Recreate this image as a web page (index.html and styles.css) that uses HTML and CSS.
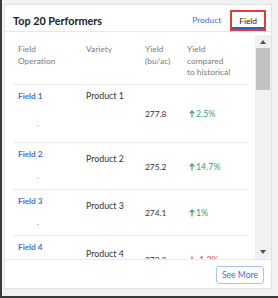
FILE: index.html
```html
<!DOCTYPE html>
<html>
<head>
<meta charset="utf-8">
<link rel="stylesheet" href="styles.css">
</head>
<body>
<div class="frame">
  <div class="card">
    <div class="card-head">
      <div class="title">Top 20 Performers</div>
      <div class="tabs">
        <div class="tab">Product</div>
        <div class="tab tab-active">Field</div>
      </div>
    </div>
    <div class="card-body">
      <div class="table">
        <div class="thead">
          <div>Field<br>Operation</div>
          <div>Variety</div>
          <div>Yield<br>(bu/ac)</div>
          <div>Yield<br>compared<br>to historical</div>
        </div>
        <div class="row row-a">
          <div class="c-field"><span class="link">Field 1</span><span class="dot"></span></div>
          <div class="c-variety">Product 1</div>
          <div class="c-yield">277.8</div>
          <div class="c-change up"><svg class="arrow" viewBox="0 0 6 8"><path d="M3 7.6V0.9M0.6 3.3L3 0.9L5.4 3.3"/></svg>2.5%</div>
        </div>
        <div class="row row-b">
          <div class="c-field"><span class="link">Field 2</span><span class="dot"></span></div>
          <div class="c-variety">Product 2</div>
          <div class="c-yield">275.2</div>
          <div class="c-change up"><svg class="arrow" viewBox="0 0 6 8"><path d="M3 7.6V0.9M0.6 3.3L3 0.9L5.4 3.3"/></svg>14.7%</div>
        </div>
        <div class="row row-c">
          <div class="c-field"><span class="link">Field 3</span><span class="dot"></span></div>
          <div class="c-variety">Product 3</div>
          <div class="c-yield">274.1</div>
          <div class="c-change up"><svg class="arrow" viewBox="0 0 6 8"><path d="M3 7.6V0.9M0.6 3.3L3 0.9L5.4 3.3"/></svg>1%</div>
        </div>
        <div class="row row-d">
          <div class="c-field"><span class="link">Field 4</span><span class="dot"></span></div>
          <div class="c-variety">Product 4</div>
          <div class="c-yield">273.3</div>
          <div class="c-change down"><svg class="arrow" viewBox="0 0 6 8"><path d="M3 0.4V7.1M0.6 4.7L3 7.1L5.4 4.7"/></svg>-1.2%</div>
        </div>
      </div>
      <div class="scrollbar">
        <div class="sb-btn"><span class="tri-up"></span></div>
        <div class="sb-thumb"></div>
        <div class="sb-fill"></div>
        <div class="sb-btn sb-btn-down"><span class="tri-down"></span></div>
      </div>
    </div>
    <div class="card-foot">
      <button class="btn">See More</button>
    </div>
  </div>
</div>
</body>
</html>
```

FILE: styles.css
```css
* { box-sizing: border-box; }
html, body { margin: 0; padding: 0; }
body {
  font-family: Lato, "Open Sans", Arial, sans-serif;
  color: #333;
  background: #f2f2f2;
}
.frame {
  width: 278px;
  height: 298px;
  border-left: 2px solid #3a3a3a;
  border-bottom: 2px solid #3a3a3a;
  background: #f2f2f2;
  padding: 4px 6px 7px 2px;
}
.card {
  width: 268px;
  height: 285px;
  background: #fff;
  border: 1px solid #e2e2e2;
  display: flex;
  flex-direction: column;
}
.card-head {
  height: 27px;
  flex: none;
  border-bottom: 1px solid #e8e8e8;
  display: flex;
  align-items: flex-end;
  justify-content: space-between;
  padding: 0 5px 0 8px;
}
.title {
  font-weight: 700;
  font-size: 10.8px;
  line-height: 21px;
  color: #222;
}
.tabs {
  display: flex;
  align-items: stretch;
  height: 21px;
}
.tab {
  font-size: 8.4px;
  color: #3f6fd1;
  display: flex;
  align-items: center;
  padding: 0 9px 1px;
}
.tab-active {
  color: #222;
  border: 2px solid #e53935;
  box-shadow: inset 0 -2px 0 #2f5fd0;
  padding: 0 7px 0;
}
.card-body {
  height: 228px;
  flex: none;
  display: flex;
  border-bottom: 1px solid #ececec;
}
.table {
  flex: 1;
  overflow: hidden;
  padding: 0 8px;
}
.thead, .row {
  display: grid;
  grid-template-columns: 68px 59px 42px 1fr;
  padding-left: 5px;
  border-bottom: 1px solid #ececec;
}
.thead {
  font-size: 8.4px;
  line-height: 11.5px;
  color: #7a7a7a;
  padding-top: 12px;
  height: 53px;
}
.row {
  font-size: 8.8px;
  line-height: 12px;
  color: #333;
  align-items: start;
}
.c-field { display: flex; flex-direction: column; }
.link {
  font-weight: 700;
  font-size: 8.2px;
  color: #3d72d9;
}
.dot {
  width: 2px;
  height: 1px;
  background: #c4c4c4;
  margin-left: 19px;
}
.c-yield { font-size: 8.4px; }
.c-change {
  display: flex;
  align-items: center;
  font-size: 8.8px;
  padding-left: 2px;
}
.up { color: #35a273; }
.down { color: #e0463f; }
.arrow {
  width: 6px;
  height: 8px;
  margin-right: 1px;
  fill: none;
  stroke: currentColor;
  stroke-width: 1.2;
}
.row-a { height: 58px; }
.row-a .c-field, .row-a .c-variety { margin-top: 5px; }
.row-a .c-yield, .row-a .c-change { margin-top: 23px; }
.row-a .dot { margin-top: 23px; }
.row-b, .row-c { height: 47px; }
.row-c { height: 46px; }
.row-b .c-field, .row-c .c-field { margin-top: 5px; }
.row-b .c-variety, .row-c .c-variety { margin-top: 10px; }
.row-b .c-yield, .row-b .c-change { margin-top: 18px; }
.row-c .c-yield, .row-c .c-change { margin-top: 17px; }
.row-b .dot { margin-top: 18px; }
.row-c .dot { margin-top: 17px; }
.row-d { height: 47px; border-bottom: none; }
.row-d .c-field { margin-top: 5px; }
.row-d .c-variety { margin-top: 12px; }
.row-d .c-yield, .row-d .c-change { margin-top: 18px; }
.row-d .dot { margin-top: 18px; }
.scrollbar {
  width: 16px;
  flex: none;
  margin-top: 3px;
  background: #f1f1f1;
  display: flex;
  flex-direction: column;
}
.sb-btn {
  height: 13px;
  display: flex;
  align-items: center;
  justify-content: center;
}
.sb-btn-down { height: 14px; }
.tri-up {
  width: 0; height: 0;
  border-left: 3.5px solid transparent;
  border-right: 3.5px solid transparent;
  border-bottom: 4px solid #505050;
}
.tri-down {
  width: 0; height: 0;
  border-left: 3.5px solid transparent;
  border-right: 3.5px solid transparent;
  border-top: 4px solid #505050;
}
.sb-thumb {
  height: 42px;
  margin: 0 1px;
  background: #c1c1c1;
}
.sb-fill { flex: 1; }
.card-foot {
  flex: 1;
  display: flex;
  justify-content: flex-end;
  align-items: flex-start;
  padding: 6px 7px 0 0;
}
.btn {
  font-family: Lato, "Open Sans", Arial, sans-serif;
  font-size: 8.6px;
  color: #3d6fd6;
  background: #fff;
  border: 1px solid #aac0ee;
  border-radius: 3px;
  height: 18px;
  width: 48px;
  padding: 0;
  line-height: 16px;
}
```
